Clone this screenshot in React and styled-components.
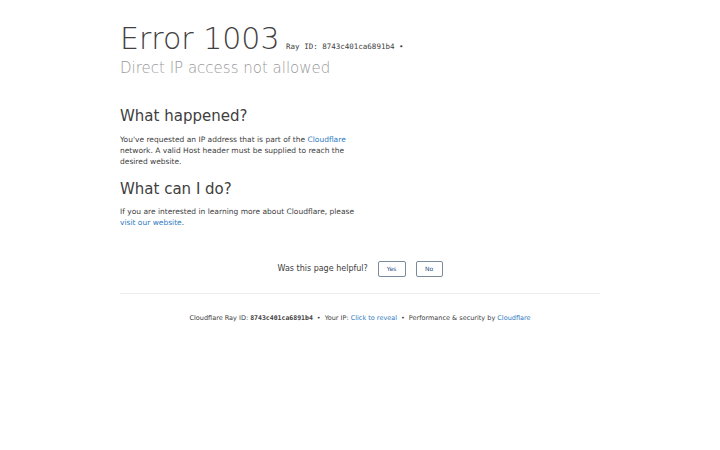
import React from 'react';
import styled, { createGlobalStyle } from 'styled-components';

const GlobalStyle = createGlobalStyle`
  html, body {
    margin: 0;
    padding: 0;
    background: #fff;
  }
  body {
    font-family: "DejaVu Sans", "Noto Sans", sans-serif;
    color: #404040;
  }
`;

const App = () => {
  return (
    <Page>
      <GlobalStyle />
      <Header>
        <Title>
          Error 1003 <RayId>Ray ID: 8743c401ca6891b4 &bull;</RayId>
        </Title>
        <Subtitle>Direct IP access not allowed</Subtitle>
      </Header>

      <Columns>
        <Column>
          <SectionTitle>What happened?</SectionTitle>
          <Text>
            You've requested an IP address that is part of the{' '}
            <Link href="#">Cloudflare</Link> network. A valid Host header must be
            supplied to reach the desired website.
          </Text>
          <SectionTitle $spaced>What can I do?</SectionTitle>
          <Text>
            If you are interested in learning more about Cloudflare, please{' '}
            <Link href="#">visit our website</Link>.
          </Text>
        </Column>
      </Columns>

      <Feedback>
        <FeedbackLabel>Was this page helpful?</FeedbackLabel>
        <FeedbackButton>Yes</FeedbackButton>
        <FeedbackButton>No</FeedbackButton>
      </Feedback>

      <Footer>
        <FooterItem>
          Cloudflare Ray ID: <FooterRay>8743c401ca6891b4</FooterRay>
        </FooterItem>
        <Separator>&bull;</Separator>
        <FooterItem>
          Your IP: <Link href="#">Click to reveal</Link>
        </FooterItem>
        <Separator>&bull;</Separator>
        <FooterItem>
          Performance &amp; security by <Link href="#">Cloudflare</Link>
        </FooterItem>
      </Footer>
    </Page>
  );
};

const Page = styled.div`
  width: 480px;
  margin: 0 auto;
  padding-top: 24px;
`;

const Header = styled.div`
  margin-bottom: 30px;
`;

const Title = styled.h1`
  margin: 0;
  font-size: 30px;
  line-height: 30px;
  font-weight: 300;
  color: #404040;
`;

const RayId = styled.small`
  margin-left: -3px;
  font-family: "DejaVu Sans Mono", "Liberation Mono", monospace;
  font-size: 7.5px;
  line-height: 1;
  font-weight: 400;
  color: #404040;
`;

const Subtitle = styled.h2`
  margin: 5px 0 0 0;
  font-size: 15px;
  line-height: 18px;
  font-weight: 300;
  color: #999;
`;

const Columns = styled.div`
  display: flex;
`;

const Column = styled.div`
  width: 240px;
`;

const SectionTitle = styled.h2`
  margin: ${(p) => (p.$spaced ? '13px' : '0')} 0 ${(p) => (p.$spaced ? '8px' : '8.5px')} 0;
  font-size: 15px;
  line-height: 18px;
  font-weight: 400;
  color: #404040;
`;

const Text = styled.p`
  margin: 0;
  font-size: 7.5px;
  line-height: 11px;
  color: #404040;
`;

const Link = styled.a`
  color: #2f7bbf;
  text-decoration: none;
`;

const Feedback = styled.div`
  display: flex;
  justify-content: center;
  align-items: center;
  gap: 10px;
  margin-top: 33px;
  padding-bottom: 16px;
  border-bottom: 1px solid #ededed;
`;

const FeedbackLabel = styled.span`
  font-size: 8px;
  color: #404040;
`;

const FeedbackButton = styled.button`
  height: 16px;
  padding: 0 8px;
  min-width: 27px;
  background: #fff;
  border: 1px solid #7a8a9a;
  border-radius: 2px;
  font-family: "DejaVu Sans", sans-serif;
  font-size: 6px;
  color: #1f4f86;
`;

const Footer = styled.div`
  display: flex;
  justify-content: center;
  align-items: baseline;
  gap: 4px;
  padding-top: 20px;
  font-size: 6.5px;
  color: #404040;
`;

const FooterItem = styled.span``;

const FooterRay = styled.strong`
  font-family: "DejaVu Sans Mono", monospace;
  font-weight: 700;
`;

const Separator = styled.span``;

export default App;
